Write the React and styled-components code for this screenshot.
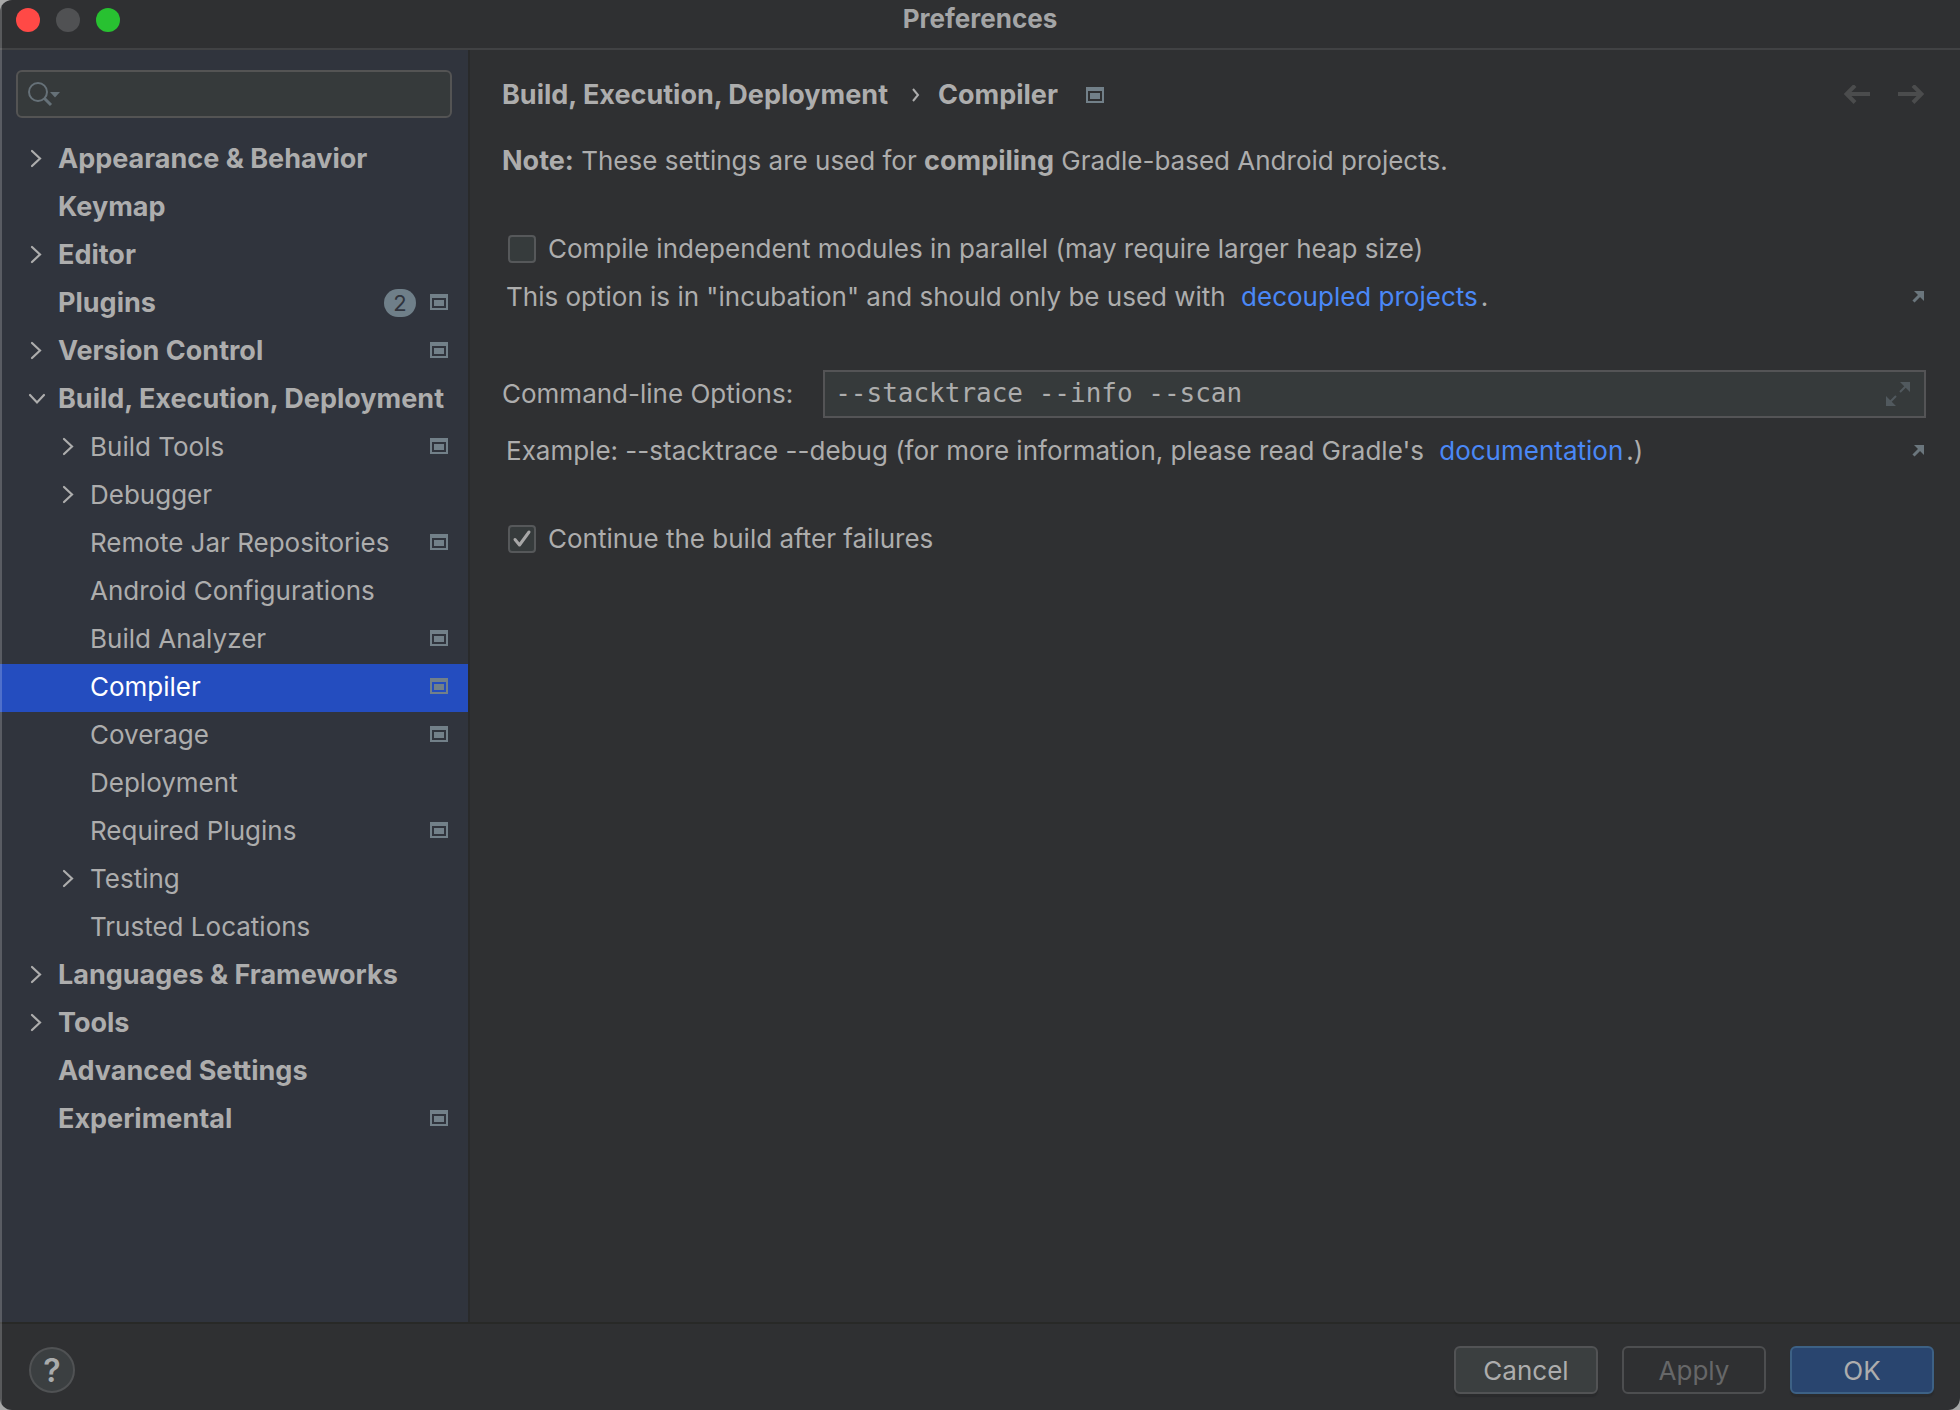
import { useState } from "react";
import styled, { createGlobalStyle } from "styled-components";

const GlobalStyle = createGlobalStyle`
  * {
    box-sizing: border-box;
  }
  body {
    margin: 0;
    background: #a8a8a8;
  }
  svg {
    display: block;
    flex: none;
  }
`;

const Window = styled.div`
  position: relative;
  min-height: 100vh;
  display: flex;
  flex-direction: column;
  border-radius: 12px 0 12px 12px;
  overflow: hidden;
  background: #2f3032;
  color: #adadad;
  font-family: Inter, "Liberation Sans", sans-serif;
  font-size: 26px;
  line-height: 32px;

  /* light edge over the window content */
  &::before {
    content: "";
    position: absolute;
    inset: 0 auto 0 0;
    width: 2px;
    background: rgba(255, 255, 255, 0.2);
  }
`;
const TitleBar = styled.header`
  height: 50px;
  display: grid;
  grid-template-columns: 1fr auto 1fr;
  align-items: center;
  padding: 0 16px 8px;
  border-bottom: 2px solid #414244;
`;
const Lights = styled.div`
  display: flex;
  gap: 16px;
`;
const Light = styled.button`
  width: 24px;
  height: 24px;
  padding: 0;
  border: none;
  border-radius: 50%;
  background: ${(props) => props.$color};
`;
const Title = styled.h1`
  margin: 0;
  padding-bottom: 2px;
  font-size: 26px;
  font-weight: 700;
  line-height: 30px;
  color: #a4a5a6;
`;
const Body = styled.div`
  flex: 1;
  display: flex;
`;
const Sidebar = styled.aside`
  width: 470px;
  flex: none;
  padding-top: 20px;
  background: #30343d;
  border-right: 2px solid #292a2b;
`;
const SearchBox = styled.label`
  height: 48px;
  margin: 0 16px 18px;
  padding-left: 10px;
  display: flex;
  align-items: center;
  gap: 8px;
  border: 2px solid #545454;
  border-radius: 6px;
  background: #363a3b;
`;
const SearchInput = styled.input`
  flex: 1;
  min-width: 0;
  border: none;
  outline: none;
  background: transparent;
  color: #adadad;
  font: inherit;
`;
const Tree = styled.ul`
  margin: 0;
  padding: 0;
  list-style: none;
`;
const TreeItem = styled.li`
  height: 48px;
  display: flex;
  align-items: center;
  gap: 12px;
  padding: 0 20px 2px ${(props) => (props.$child ? 58 : 26)}px;
  font-size: ${(props) => (props.$child ? 26 : 27)}px;
  font-weight: ${(props) => (props.$child ? 400 : 700)};
  background: ${(props) => (props.$selected ? "#244dbf" : "transparent")};
  color: ${(props) => (props.$selected ? "#ffffff" : "inherit")};
  white-space: nowrap;
`;
const ChevronSlot = styled.span`
  width: 20px;
  height: 20px;
  flex: none;
`;
const ItemLabel = styled.span`
  flex: 1;
  min-width: 0;
`;
const ItemIcon = styled.span`
  padding-bottom: 2px;
`;
const Badge = styled.span`
  width: 32px;
  height: 28px;
  margin-right: 2px;
  border-radius: 14px;
  background: #6f7f89;
  color: #30343d;
  font-size: 22px;
  font-weight: 400;
  line-height: 28px;
  text-align: center;
`;
const Main = styled.main`
  flex: 1;
  min-width: 0;
  padding: 28px 34px 28px 32px;
`;
const TopRow = styled.div`
  height: 34px;
  display: flex;
  align-items: center;
  justify-content: space-between;
`;
const Breadcrumbs = styled.nav`
  display: flex;
  align-items: center;
  font-size: 27px;
  font-weight: 700;
`;
const CrumbArrow = styled.svg`
  margin: 0 18px 0 24px;
`;
const CrumbIcon = styled.span`
  display: flex;
  margin-left: 28px;
`;
const NavButtons = styled.div`
  display: flex;
  gap: 28px;
  padding-right: 2px;
`;
const IconButton = styled.button`
  display: flex;
  padding: 0;
  border: none;
  background: none;
`;
const Note = styled.p`
  margin: 33px 0 54px;
`;
const Strong = styled.b`
  font-size: 27px;
  font-weight: 700;
`;
const CheckRow = styled.label`
  height: 36px;
  display: flex;
  align-items: center;
  gap: 12px;
  padding-left: 6px;
`;
const CheckBox = styled.input`
  appearance: none;
  width: 28px;
  height: 28px;
  margin: 0;
  flex: none;
  border: 2px solid #56585a;
  border-radius: 4px;
  background: #363b3c;

  &:checked {
    background: #363b3c
      url("data:image/svg+xml,%3Csvg xmlns='http://www.w3.org/2000/svg' viewBox='0 0 24 24' fill='none' stroke='%23a7a7a7' stroke-width='3' stroke-linecap='round' stroke-linejoin='round'%3E%3Cpath d='M5 12.500L9.500 18L19 5'/%3E%3C/svg%3E");
  }
`;
const Hint = styled.div`
  height: 32px;
  margin-top: ${(props) => props.$top}px;
  padding: 0 2px 0 4px;
  display: flex;
  align-items: center;
  justify-content: space-between;
`;
const Link = styled.a`
  margin: 0 3px 0 8px;
  color: #4a88f7;
  text-decoration: none;
`;
const FieldRow = styled.div`
  display: flex;
  align-items: center;
  gap: 30px;
  margin-top: 57px;
`;
const FieldBox = styled.div`
  flex: 1;
  height: 48px;
  display: flex;
  align-items: center;
  padding: 0 14px 0 10px;
  border: 2px solid #545456;
  background: #363a3b;
`;
const FieldInput = styled.input`
  flex: 1;
  min-width: 0;
  padding: 0 0 2px;
  border: none;
  outline: none;
  background: transparent;
  color: #adadad;
  font: 26px "DejaVu Sans Mono", monospace;
`;
const LastCheck = styled.div`
  margin-top: 54px;
`;
const Footer = styled.footer`
  height: 88px;
  display: flex;
  align-items: center;
  gap: 24px;
  padding: 6px 26px 0 29px;
  border-top: 2px solid #282927;
`;
const HelpButton = styled.button`
  width: 46px;
  height: 46px;
  margin-right: auto;
  padding: 0;
  border: 2px solid #505254;
  border-radius: 50%;
  background: #3b3f41;
  color: #a9abac;
  font: 600 32px Inter, sans-serif;
`;
const buttonColors = {
  normal: ["#3b3f40", "#525355", "#adadad"],
  disabled: ["transparent", "#4d4e50", "#666768"],
  primary: ["#29456f", "#3d6185", "#adadad"],
};
const Button = styled.button`
  width: 144px;
  height: 48px;
  padding: 2px 0 0;
  border: 2px solid ${(props) => buttonColors[props.$kind][1]};
  border-radius: 6px;
  background: ${(props) => buttonColors[props.$kind][0]};
  color: ${(props) => buttonColors[props.$kind][2]};
  box-shadow: ${(props) =>
    props.$kind === "disabled" ? "none" : "0 3px 1px #2a2b2d"};
  font: inherit;
`;

const ProjectIcon = () => (
  <svg width="18" height="16" viewBox="0 0 18 16" fill="#728089">
    <path fillRule="evenodd" d="M0 0H18V16H0ZM2 4V14H16V4Z" />
    <path d="M4 6H14V12H4Z" />
  </svg>
);
const Chevron = ({ open }) => (
  <svg
    width="20"
    height="20"
    viewBox="0 0 20 20"
    fill="none"
    stroke="#adadad"
    strokeWidth="2.200"
    strokeLinecap="round"
  >
    <path d={open ? "M4 6L11 13.500L18 6" : "M6 2L14 9.500L6 17"} />
  </svg>
);
const SearchIcon = () => (
  <svg width="34" height="26" viewBox="0 0 34 26" fill="none">
    <circle cx="10" cy="11" r="9" stroke="#667178" strokeWidth="2" />
    <path d="M16.500 17.500L23 24" stroke="#667178" strokeWidth="3" />
    <path d="M22 11H32L27 16.500Z" fill="#667178" />
  </svg>
);
const ArrowIcon = ({ right }) => (
  <svg
    width="26"
    height="20"
    viewBox="0 0 26 20"
    fill="none"
    stroke="#4b4c4d"
    strokeWidth="4"
  >
    <path
      d={
        right
          ? "M0 9H23M15 0.500L23.500 9L15 17.500"
          : "M26 9H3M11 0.500L2.500 9L11 17.500"
      }
    />
  </svg>
);
const ExternalIcon = () => (
  <svg width="12" height="12" viewBox="0 0 12 12">
    <path d="M1.500 10.500L8 4" stroke="#6b767d" strokeWidth="3" />
    <path d="M2 0H12V10Z" fill="#6b767d" />
  </svg>
);
const ExpandIcon = () => (
  <svg width="24" height="24" viewBox="0 0 24 24">
    <path d="M14 10L20 4M10 14L4 20" stroke="#51595e" strokeWidth="2" />
    <path d="M14 0H24V10ZM0 14V24H10Z" fill="#51595e" />
  </svg>
);

const treeItems = [
  { label: "Appearance & Behavior", arrow: "closed" },
  { label: "Keymap" },
  { label: "Editor", arrow: "closed" },
  { label: "Plugins", badge: 2, project: true },
  { label: "Version Control", arrow: "closed", project: true },
  { label: "Build, Execution, Deployment", arrow: "open" },
  { label: "Build Tools", child: true, arrow: "closed", project: true },
  { label: "Debugger", child: true, arrow: "closed" },
  { label: "Remote Jar Repositories", child: true, project: true },
  { label: "Android Configurations", child: true },
  { label: "Build Analyzer", child: true, project: true },
  { label: "Compiler", child: true, project: true },
  { label: "Coverage", child: true, project: true },
  { label: "Deployment", child: true },
  { label: "Required Plugins", child: true, project: true },
  { label: "Testing", child: true, arrow: "closed" },
  { label: "Trusted Locations", child: true },
  { label: "Languages & Frameworks", arrow: "closed" },
  { label: "Tools", arrow: "closed" },
  { label: "Advanced Settings" },
  { label: "Experimental", project: true },
];

const App = () => {
  const [selected, setSelected] = useState("Compiler");
  const [parallel, setParallel] = useState(false);
  const [keepGoing, setKeepGoing] = useState(true);
  const [options, setOptions] = useState("--stacktrace --info --scan");

  return (
    <Window>
      <GlobalStyle />
      <TitleBar>
        <Lights>
          <Light $color="#ff4946" aria-label="Close" />
          <Light $color="#505153" aria-label="Minimize" />
          <Light $color="#28c131" aria-label="Zoom" />
        </Lights>
        <Title>Preferences</Title>
      </TitleBar>
      <Body>
        <Sidebar>
          <SearchBox>
            <SearchIcon />
            <SearchInput type="text" aria-label="Search settings" />
          </SearchBox>
          <Tree>
            {treeItems.map((item) => (
              <TreeItem
                key={item.label}
                $child={item.child}
                $selected={item.label === selected}
                onClick={() => setSelected(item.label)}
              >
                <ChevronSlot>
                  {item.arrow && <Chevron open={item.arrow === "open"} />}
                </ChevronSlot>
                <ItemLabel>{item.label}</ItemLabel>
                {item.badge && <Badge>{item.badge}</Badge>}
                {item.project && (
                  <ItemIcon>
                    <ProjectIcon />
                  </ItemIcon>
                )}
              </TreeItem>
            ))}
          </Tree>
        </Sidebar>
        <Main>
          <TopRow>
            <Breadcrumbs>
              <span>Build, Execution, Deployment</span>
              <CrumbArrow width="8" height="14" viewBox="0 0 8 14" fill="none">
                <path d="M1 1L6 7L1 13" stroke="#adadad" strokeWidth="2" />
              </CrumbArrow>
              <span>Compiler</span>
              <CrumbIcon>
                <ProjectIcon />
              </CrumbIcon>
            </Breadcrumbs>
            <NavButtons>
              <IconButton aria-label="Back" disabled>
                <ArrowIcon />
              </IconButton>
              <IconButton aria-label="Forward" disabled>
                <ArrowIcon right />
              </IconButton>
            </NavButtons>
          </TopRow>
          <Note>
            <Strong>Note:</Strong> These settings are used for{" "}
            <Strong>compiling</Strong> Gradle-based Android projects.
          </Note>
          <CheckRow>
            <CheckBox
              type="checkbox"
              checked={parallel}
              onChange={(e) => setParallel(e.target.checked)}
            />
            Compile independent modules in parallel (may require larger heap
            size)
          </CheckRow>
          <Hint $top={14}>
            <span>
              This option is in "incubation" and should only be used with
              <Link href="#decoupled"> decoupled projects</Link>.
            </span>
            <ExternalIcon />
          </Hint>
          <FieldRow>
            <label htmlFor="options">Command-line Options:</label>
            <FieldBox>
              <FieldInput
                id="options"
                type="text"
                value={options}
                spellCheck={false}
                onChange={(e) => setOptions(e.target.value)}
              />
              <IconButton aria-label="Expand">
                <ExpandIcon />
              </IconButton>
            </FieldBox>
          </FieldRow>
          <Hint $top={17}>
            <span>
              Example: --stacktrace --debug (for more information, please read
              Gradle's
              <Link href="#documentation"> documentation</Link>.)
            </span>
            <ExternalIcon />
          </Hint>
          <LastCheck>
            <CheckRow>
              <CheckBox
                type="checkbox"
                checked={keepGoing}
                onChange={(e) => setKeepGoing(e.target.checked)}
              />
              Continue the build after failures
            </CheckRow>
          </LastCheck>
        </Main>
      </Body>
      <Footer>
        <HelpButton aria-label="Help">?</HelpButton>
        <Button $kind="normal">Cancel</Button>
        <Button $kind="disabled" disabled>
          Apply
        </Button>
        <Button $kind="primary">OK</Button>
      </Footer>
    </Window>
  );
};

export default App;
